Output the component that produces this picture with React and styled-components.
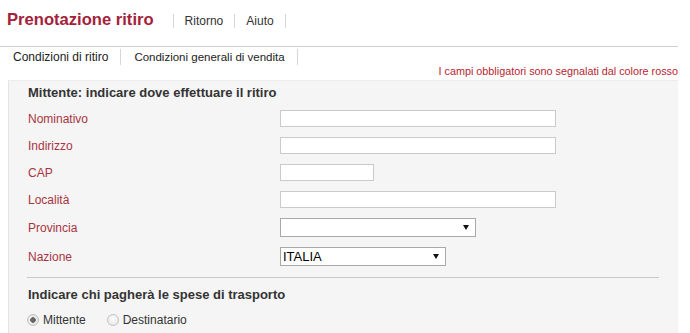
import React, { useState } from "react";
import styled, { createGlobalStyle } from "styled-components";

const GlobalStyle = createGlobalStyle`
  body {
    margin: 0;
    background: #fff;
    font-family: "Liberation Sans", Arial, sans-serif;
    color: #333;
    overflow: hidden;
  }
`;

const Page = styled.div`
  width: 678px;
`;

const Header = styled.div`
  display: flex;
  align-items: baseline;
  padding: 9px 0 16px 7px;
  border-bottom: 1px solid #cfcfcf;
`;

const Title = styled.h1`
  margin: 0 19px 0 0;
  font-size: 16.6px;
  line-height: 21px;
  font-weight: bold;
  color: #a3223a;
`;

const Nav = styled.div`
  display: flex;
  border-right: 1px solid #d6d6d6;
`;

const NavLink = styled.a`
  font-size: 12px;
  line-height: 14px;
  color: #333;
  padding: 0 11px;
  border-left: 1px solid #d6d6d6;
  cursor: pointer;
`;

const Tabs = styled.div`
  display: flex;
  margin-top: 2px;
`;

const Tab = styled.a`
  font-size: ${(p) => (p.small ? "11.5px" : "12px")};
  line-height: 16px;
  color: #222;
  padding: 0 12px 0 13px;
  border-right: 1px solid #d6d6d6;
  cursor: pointer;
`;

const Note = styled.div`
  text-align: right;
  font-size: 10.8px;
  line-height: 13px;
  color: #b8242f;
  margin-bottom: 2px;
`;

const Panel = styled.div`
  margin-left: 8px;
  background: #f5f5f5;
  border-left: 1px solid #e4e4e4;
  border-top: 1px solid #ececec;
  padding: 3px 19px 20px 18px;
`;

const Heading = styled.h2`
  margin: ${(p) => p.top || 0}px 0 3px 1px;
  font-size: 13px;
  line-height: 18px;
  font-weight: bold;
  color: #333;
`;

const Row = styled.div`
  display: flex;
  align-items: center;
  padding: 5px 0;
`;

const Label = styled.label`
  width: 252px;
  padding-left: 1px;
  font-size: 12px;
  color: #a8343f;
`;

const TextInput = styled.input`
  box-sizing: border-box;
  width: ${(p) => p.w}px;
  height: 17px;
  margin: 0;
  border: 1px solid #cacaca;
  background: #fff;
  padding: 0 3px;
  font: 12px "Liberation Sans", Arial, sans-serif;
  outline: none;
`;

const SelectBox = styled.div`
  position: relative;
  width: ${(p) => p.w}px;
  height: 19px;

  &::after {
    content: "";
    position: absolute;
    right: 7px;
    top: 7px;
    border-left: 3px solid transparent;
    border-right: 3px solid transparent;
    border-top: 5px solid #111;
    pointer-events: none;
  }
`;

const Select = styled.select`
  box-sizing: border-box;
  appearance: none;
  width: 100%;
  height: 19px;
  margin: 0;
  border: 1px solid #a9a9a9;
  border-radius: 0;
  background: #fff;
  padding: 0 2px;
  font: 13px "Liberation Sans", Arial, sans-serif;
  color: #000;
  outline: none;
`;

const Divider = styled.hr`
  margin: 6px 0 0 0;
  border: 0;
  border-top: 1px solid #c8c8c8;
`;

const RadioRow = styled.div`
  display: flex;
  align-items: center;
  margin-top: 7px;
  height: 18px;
`;

const RadioLabel = styled.label`
  display: flex;
  align-items: center;
  font-size: 12px;
  color: #333;
  margin-right: 21px;
  cursor: pointer;
`;

const Radio = styled.input`
  appearance: none;
  box-sizing: border-box;
  width: 12px;
  height: 12px;
  margin: 0 4px 0 0;
  border: 1px solid #c4c4c4;
  border-radius: 50%;
  background: radial-gradient(circle at 50% 40%, #fdfdfd, #e2e2e2);

  &:checked {
    background: radial-gradient(circle, #666 0 2.5px, #ececec 3px, #dcdcdc 100%);
  }
`;

const fields = [
  { label: "Nominativo", w: 276 },
  { label: "Indirizzo", w: 276 },
  { label: "CAP", w: 94 },
  { label: "Località", w: 276 },
];

export default function App() {
  const [payer, setPayer] = useState("mittente");

  return (
    <Page>
      <GlobalStyle />
      <Header>
        <Title>Prenotazione ritiro</Title>
        <Nav>
          <NavLink>Ritorno</NavLink>
          <NavLink>Aiuto</NavLink>
        </Nav>
      </Header>
      <Tabs>
        <Tab>Condizioni di ritiro</Tab>
        <Tab small>Condizioni generali di vendita</Tab>
      </Tabs>
      <Note>I campi obbligatori sono segnalati dal colore rosso</Note>
      <Panel>
        <Heading>Mittente: indicare dove effettuare il ritiro</Heading>
        {fields.map((f) => (
          <Row key={f.label}>
            <Label>{f.label}</Label>
            <TextInput type="text" w={f.w} />
          </Row>
        ))}
        <Row>
          <Label>Provincia</Label>
          <SelectBox w={196}>
            <Select defaultValue="">
              <option value=""></option>
            </Select>
          </SelectBox>
        </Row>
        <Row>
          <Label>Nazione</Label>
          <SelectBox w={166}>
            <Select defaultValue="IT">
              <option value="IT">ITALIA</option>
            </Select>
          </SelectBox>
        </Row>
        <Divider />
        <Heading top={8}>Indicare chi pagherà le spese di trasporto</Heading>
        <RadioRow>
          <RadioLabel>
            <Radio
              type="radio"
              name="payer"
              checked={payer === "mittente"}
              onChange={() => setPayer("mittente")}
            />
            Mittente
          </RadioLabel>
          <RadioLabel>
            <Radio
              type="radio"
              name="payer"
              checked={payer === "destinatario"}
              onChange={() => setPayer("destinatario")}
            />
            Destinatario
          </RadioLabel>
        </RadioRow>
      </Panel>
    </Page>
  );
}
